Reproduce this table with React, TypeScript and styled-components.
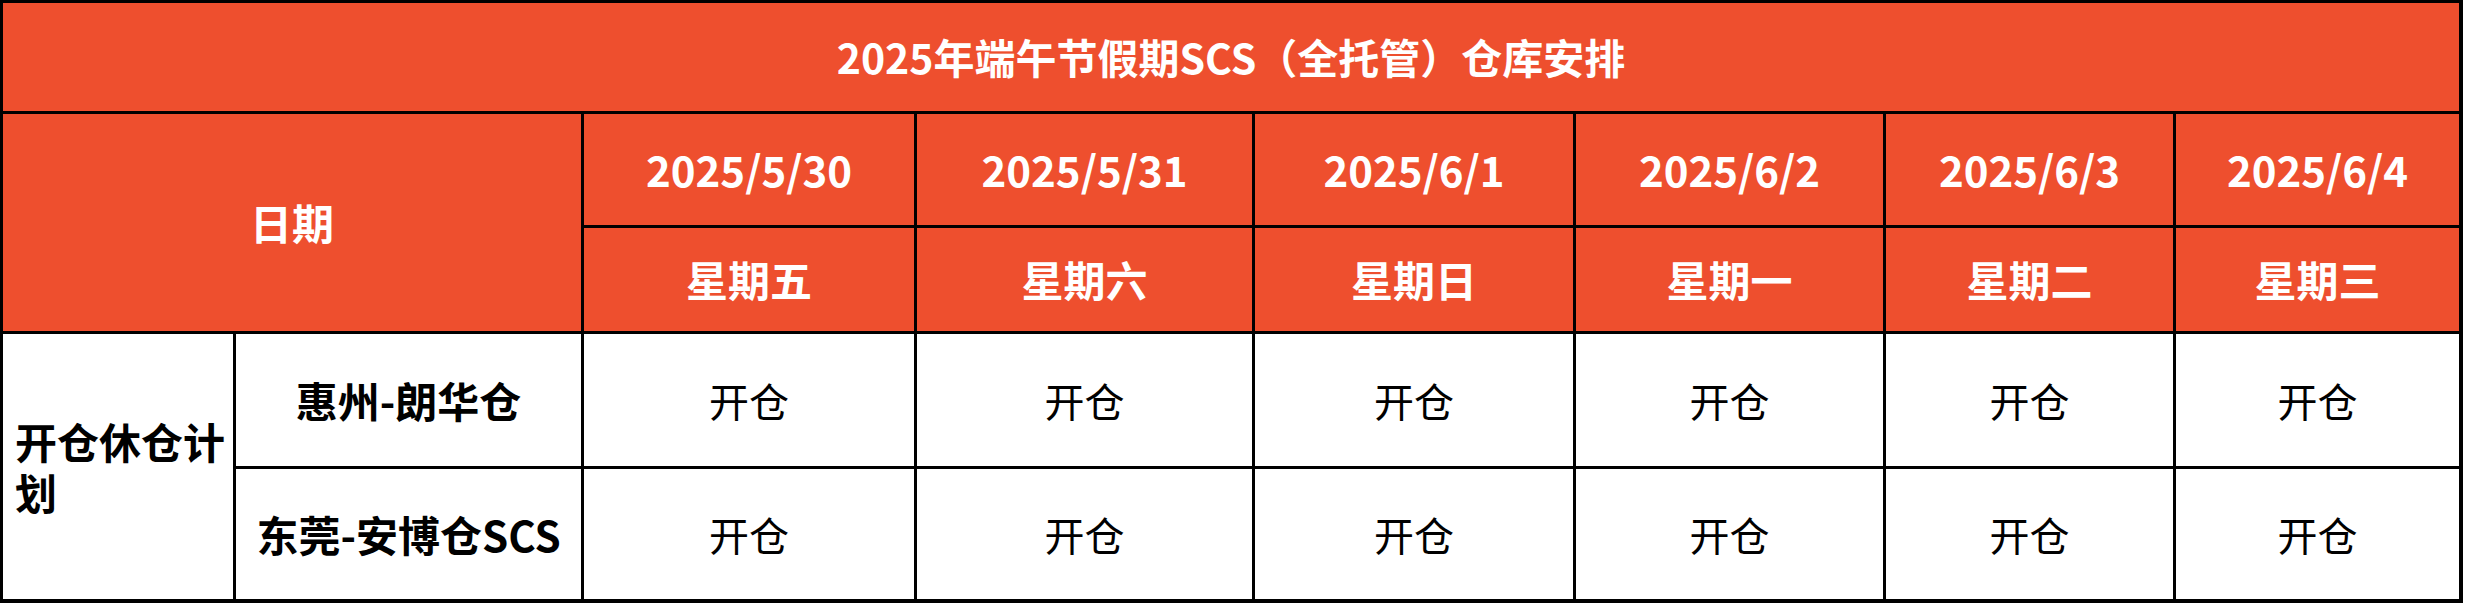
import { Fragment } from 'react';
import styled, { createGlobalStyle } from 'styled-components';

const GlobalStyle = createGlobalStyle`
  html, body {
    margin: 0;
    padding: 0;
    background: #ffffff;
  }
  body {
    font-family: "Noto Sans CJK SC", "Noto Sans", sans-serif;
  }
`;

const ACCENT = '#ee4f2e';

const Sheet = styled.div`
  display: grid;
  grid-template-columns: 230px 345px 330px 335px 318px 307px 287px 283px;
  grid-template-rows: 108px 111px 103px 132px 130px;
  gap: 3px;
  width: max-content;
  padding: 3px 4px 4px 3px;
  background: #000000;
`;

type Variant = 'title' | 'head' | 'label' | 'value';

const Cell = styled.div<{
  $variant: Variant;
  $colSpan?: number;
  $rowSpan?: number;
  $left?: boolean;
}>`
  grid-column: span ${({ $colSpan }) => $colSpan ?? 1};
  grid-row: span ${({ $rowSpan }) => $rowSpan ?? 1};
  display: flex;
  align-items: center;
  justify-content: ${({ $left }) => ($left ? 'flex-start' : 'center')};
  padding: ${({ $left }) => ($left ? '0 8px 0 12px' : '0')};
  background: ${({ $variant }) =>
    $variant === 'title' || $variant === 'head' ? ACCENT : '#ffffff'};
  color: ${({ $variant }) =>
    $variant === 'title' || $variant === 'head' ? '#ffffff' : '#000000'};
  font-size: ${({ $variant }) =>
    $variant === 'value' ? '40px' : $variant === 'title' ? '41px' : '42px'};
  font-weight: ${({ $variant }) => ($variant === 'value' ? 400 : 700)};
  line-height: 1.2;
  text-align: ${({ $left }) => ($left ? 'left' : 'center')};
  white-space: ${({ $left }) => ($left ? 'normal' : 'nowrap')};
  word-break: break-all;
`;

const days = [
  { date: '2025/5/30', weekday: '星期五' },
  { date: '2025/5/31', weekday: '星期六' },
  { date: '2025/6/1', weekday: '星期日' },
  { date: '2025/6/2', weekday: '星期一' },
  { date: '2025/6/3', weekday: '星期二' },
  { date: '2025/6/4', weekday: '星期三' },
];

const warehouses = [
  { name: '惠州-朗华仓', status: ['开仓', '开仓', '开仓', '开仓', '开仓', '开仓'] },
  { name: '东莞-安博仓SCS', status: ['开仓', '开仓', '开仓', '开仓', '开仓', '开仓'] },
];

export default function App() {
  return (
    <>
      <GlobalStyle />
      <Sheet>
        <Cell $variant="title" $colSpan={8}>
          2025年端午节假期SCS（全托管）仓库安排
        </Cell>

        <Cell $variant="head" $colSpan={2} $rowSpan={2}>
          日期
        </Cell>
        {days.map((d) => (
          <Cell key={d.date} $variant="head">
            {d.date}
          </Cell>
        ))}
        {days.map((d) => (
          <Cell key={d.weekday} $variant="head">
            {d.weekday}
          </Cell>
        ))}

        <Cell $variant="label" $rowSpan={2} $left>
          开仓休仓计划
        </Cell>
        {warehouses.map((w) => (
          <Fragment key={w.name}>
            <Cell $variant="label">{w.name}</Cell>
            {w.status.map((s, i) => (
              <Cell key={i} $variant="value">
                {s}
              </Cell>
            ))}
          </Fragment>
        ))}
      </Sheet>
    </>
  );
}
